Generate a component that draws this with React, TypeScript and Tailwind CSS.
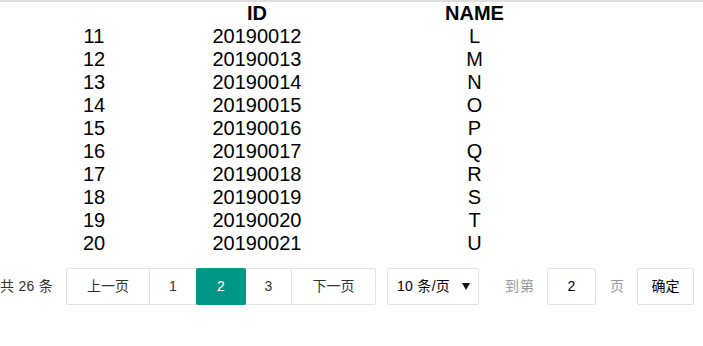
const rows = [
  [11, "20190012", "L"],
  [12, "20190013", "M"],
  [13, "20190014", "N"],
  [14, "20190015", "O"],
  [15, "20190016", "P"],
  [16, "20190017", "Q"],
  [17, "20190018", "R"],
  [18, "20190019", "S"],
  [19, "20190020", "T"],
  [20, "20190021", "U"],
] as const;

const font = { fontFamily: '"Liberation Sans", "Noto Sans CJK SC", sans-serif' };

export default function App() {
  return (
    <div className="min-h-screen bg-white text-black" style={font}>
      <div className="border-t-2 border-[#dedede]">
        {/* Table */}
        <div className="grid grid-cols-[188px_138px_297px] text-[20px] leading-[23px] text-center">
          <div className="font-bold"></div>
          <div className="font-bold">ID</div>
          <div className="font-bold">NAME</div>
          {rows.map(([n, id, name]) => (
            <Row key={n} n={n} id={id} name={name} />
          ))}
        </div>

        {/* Pagination */}
        <div className="mt-[13px] flex items-center text-[14px] text-[#333]">
          <span className="mr-[14px] w-[52px] whitespace-nowrap tracking-[0.3px] leading-[37px]">共 26 条</span>
          <PageBtn label="上一页" w="w-[84px]" first />
          <PageBtn label="1" w="w-[48px]" />
          <span className="relative z-10 -mr-px flex h-[37px] w-[50px] items-center justify-center rounded-[2px] bg-[#009688] text-white">
            2
          </span>
          <PageBtn label="3" w="w-[47px]" />
          <PageBtn label="下一页" w="w-[85px]" last />

          <div className="ml-[12px] flex h-[37px] w-[92px] items-center rounded-[2px] border border-[#e2e2e2] pl-[9px] pr-[8px] text-black">
            <span className="flex-1 tracking-[0.3px]">10 条/页</span>
            <svg width="8" height="7" viewBox="0 0 8 7">
              <path d="M0 0 H8 L4 7 Z" fill="#111" />
            </svg>
          </div>

          <span className="ml-[26px] w-[30px] tracking-[1px] text-[#999]">到第</span>
          <div className="ml-[12px] flex h-[37px] w-[49px] items-center justify-center rounded-[2px] border border-[#e2e2e2] text-black">
            2
          </div>
          <span className="ml-[14px] w-[15px] text-[#999]">页</span>
          <button className="ml-[12px] flex h-[37px] w-[57px] items-center justify-center rounded-[2px] border border-[#e2e2e2] bg-white text-black">
            确定
          </button>
        </div>
      </div>
    </div>
  );
}

function Row({ n, id, name }: { n: number; id: string; name: string }) {
  return (
    <>
      <div>{n}</div>
      <div>{id}</div>
      <div>{name}</div>
    </>
  );
}

const PageBtn = ({ label, w, first, last }: { label: string; w: string; first?: boolean; last?: boolean }) => {
  return (
    <span
      className={`
        -mr-px flex h-[37px] items-center justify-center border border-[#e2e2e2] bg-white ${w}
        ${first ? "rounded-l-[2px]" : ""}
        ${last ? "rounded-r-[2px]" : ""}
      `}
    >
      {label}
    </span>
  );
};
